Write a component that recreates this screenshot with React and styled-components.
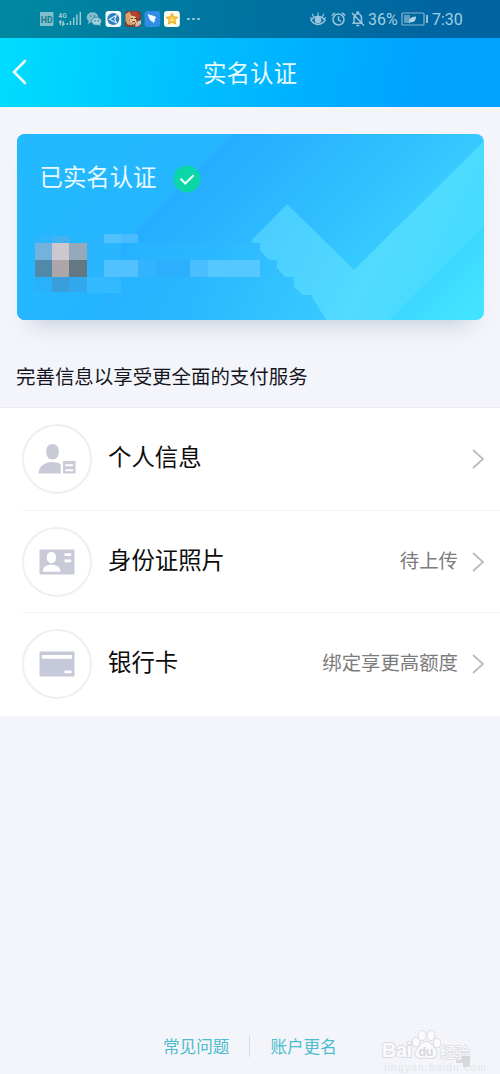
import styled, { createGlobalStyle } from "styled-components";

const GlobalStyle = createGlobalStyle`
  * {
    box-sizing: border-box;
  }
  body {
    margin: 0;
    background: #f4f5fa;
    font-family: Roboto, "Noto Sans CJK SC", sans-serif;
  }
  svg {
    display: block;
    flex-shrink: 0;
  }
`;

const Page = styled.div`
  display: flex;
  flex-direction: column;
  width: 500px;
  height: 1074px;
  overflow: hidden;
  background: #f4f5fa;
`;

const Top = styled.div`
  background: linear-gradient(100deg, #00deff 0%, #00bdff 42%, #00a2ff 85%);
`;

const StatusBar = styled.div`
  display: flex;
  justify-content: space-between;
  align-items: center;
  height: 38px;
  padding: 0 37px 0 39px;
  background: rgba(0, 10, 20, 0.4);
  color: #a3cfe0;
`;

const StatusGroup = styled.div`
  display: flex;
  align-items: center;
  gap: ${(props) => props.$gap}px;
`;

const StatusText = styled.span`
  padding-top: 1px;
  font-size: 16px;
  line-height: 20px;
  width: ${(props) => props.$width}px;
  white-space: nowrap;
`;

const NavBar = styled.header`
  display: grid;
  grid-template-columns: 60px 1fr 60px;
  align-items: center;
  height: 69px;
`;

const BackButton = styled.button`
  padding: 0 0 2px 11px;
  border: 0;
  background: none;
  color: #e9fbff;
`;

const Title = styled.h1`
  margin: 0;
  padding-top: 3px;
  color: #e6faff;
  font-size: 23.5px;
  font-weight: 400;
  line-height: 34px;
  text-align: center;
`;

const Card = styled.section`
  position: relative;
  height: 186px;
  margin: 26.5px 16.5px 0;
  border-radius: 8px;
  box-shadow: 0 17px 22px -14px rgba(120, 140, 170, 0.42);
`;

const CardArt = styled.svg`
  position: absolute;
  top: 0;
  left: 0;
  border-radius: 8px;
`;

const CardHeading = styled.div`
  position: relative;
  display: flex;
  align-items: center;
  gap: 17px;
  padding: 27px 0 0 23px;
`;

const CardTitle = styled.h2`
  margin: 0;
  color: #e9faff;
  font-size: 23.4px;
  font-weight: 400;
  line-height: 34px;
`;

const SectionTitle = styled.h3`
  margin: 43.5px 0 0 16px;
  color: #15151f;
  font-size: 19.45px;
  font-weight: 400;
  line-height: 29px;
`;

const List = styled.div`
  margin-top: 15px;
  background: #fff;
  border-top: 1px solid #ededf1;
`;

const Row = styled.div`
  display: flex;
  align-items: center;
  height: 102.5px;
  padding: 0 15px 0 22px;
`;

const Divider = styled.div`
  height: 1px;
  margin: -1px 0 0 22px;
  background: #f4f4f6;
`;

const RowIcon = styled.div`
  display: flex;
  align-items: center;
  justify-content: center;
  width: 70px;
  height: 70px;
  border: 2px solid #efeff1;
  border-radius: 50%;
`;

const RowLabel = styled.span`
  flex: 1;
  margin: -2px 0 0 16px;
  color: #0c0c0c;
  font-size: 23.4px;
  line-height: 34px;
`;

const RowValue = styled.span`
  margin: 0 13px 0 0;
  color: #7c7c7c;
  font-size: 19.4px;
  line-height: 28px;
`;

const Footer = styled.footer`
  display: flex;
  align-items: center;
  height: 56px;
  margin-top: auto;
  padding-left: 163px;
`;

const FooterLink = styled.a`
  padding-top: 3px;
  color: #4bbdce;
  font-size: 16.6px;
  line-height: 24px;
  white-space: nowrap;
`;

const FooterLine = styled.span`
  width: 1px;
  height: 21px;
  margin: 0 20px;
  background: #d9dce2;
`;

const Watermark = styled.svg`
  margin-left: 43px;
`;

const mosaic = [
  [19, 102, 17, 7, "#2fb5f9"],
  [36, 102, 17, 7, "#43b3ef"],
  [18, 109, 17, 17, "#74b2dc"],
  [35, 109, 17, 17, "#cdc7d0"],
  [52, 109, 18, 17, "#95a9bb"],
  [18, 126, 17, 17, "#5189ab"],
  [35, 126, 17, 17, "#ada5a9"],
  [52, 126, 18, 17, "#647883"],
  [18, 143, 17, 15, "#2bb1f9"],
  [35, 143, 17, 15, "#389fda"],
  [52, 143, 18, 15, "#32a9ec"],
  [70, 102, 17, 7, "#29b5fe"],
  [70, 109, 34, 34, "#29b6ff"],
  [70, 143, 34, 16, "#33b9ff"],
  [87, 100, 17, 9, "#52c2ff"],
  [104, 100, 17, 9, "#49bcff"],
  [87, 126, 34, 17, "#51c2ff"],
  [121, 126, 18, 17, "#33b3fe"],
  [139, 126, 34, 17, "#2cb0fe"],
  [173, 126, 18, 17, "#4abeff"],
  [191, 126, 52, 17, "#57c7ff"],
];

const CardBackground = () => (
  <CardArt width="467" height="186" viewBox="0 0 467 186">
    <defs>
      <linearGradient id="base" gradientUnits="userSpaceOnUse" x1="185" y1="20" x2="400" y2="235">
        <stop offset="0" stopColor="#24abff" />
        <stop offset="0.5" stopColor="#33c2ff" />
        <stop offset="1" stopColor="#42e4ff" />
      </linearGradient>
      <linearGradient id="corner" gradientUnits="userSpaceOnUse" x1="50" y1="0" x2="150" y2="100">
        <stop offset="0" stopColor="#23b9ff" />
        <stop offset="1" stopColor="#25b5ff" />
      </linearGradient>
      <linearGradient id="blocks" gradientUnits="userSpaceOnUse" x1="80" y1="100" x2="300" y2="186">
        <stop offset="0" stopColor="#24b0ff" />
        <stop offset="0.5" stopColor="#2cb8ff" />
        <stop offset="1" stopColor="#38c8ff" />
      </linearGradient>
      <linearGradient id="tick" gradientUnits="userSpaceOnUse" x1="260" y1="80" x2="440" y2="170">
        <stop offset="0" stopColor="#4bceff" />
        <stop offset="0.55" stopColor="#52daff" />
        <stop offset="1" stopColor="#42dcff" />
      </linearGradient>
    </defs>
    <rect width="467" height="186" fill="url(#base)" />
    <path d="M0 0H216L105 111L80 186H0Z" fill="url(#corner)" />
    <path d="M234 107L270 70L337 136L467 7V92L372 186H309Z" fill="url(#tick)" />
    <path
      d="M115 102L121 109H243V126H260V143H277V161H294L309 186H80Z"
      fill="url(#blocks)"
    />
    {mosaic.map(([x, y, width, height, fill]) => (
      <rect key={`${x}-${y}`} x={x} y={y} width={width} height={height} fill={fill} />
    ))}
  </CardArt>
);

const VerifiedBadge = () => (
  <svg width="28" height="34" viewBox="0 -4 28 34" fill="none">
    <circle cx="14" cy="14" r="13.5" fill="#0bd6a8" />
    <path d="M7.5 13.8L12.3 18.500L20.700 10.3" stroke="#e9fff9" strokeWidth="2.200" />
  </svg>
);

const SignalIcons = () => (
  <svg width="156" height="20" viewBox="39 9 156 20" fill="none">
    <rect x="40" y="12" width="13.5" height="14" rx="1" fill="#83bfca" />
    <text x="40.8" y="22.5" fontSize="9.500" fontWeight="700" fill="#137b91" textLength="12" lengthAdjust="spacingAndGlyphs">HD</text>
    <text x="58.3" y="17.8" fontSize="8" fontWeight="700" fill="#9ccad5" textLength="8.500" lengthAdjust="spacingAndGlyphs">4G</text>
    <path
      d="M60.5 25v-4l-1.5 1.5M63 21v4l1.5-1.5M67.3 23v2M70.5 21v4M73.7 17.5v7.5M76.9 14.5V25M80.3 12V25"
      stroke="#9ccad5"
      strokeWidth="1.5"
    />
    <ellipse cx="92.5" cy="17.3" rx="5.8" ry="5" fill="#86bdcc" />
    <path d="M89 20l-1 4 4-2" fill="#86bdcc" />
    <ellipse cx="96.5" cy="21.3" rx="5" ry="4" fill="#a4cfda" stroke="#137b91" strokeWidth="0.7" />
    <path d="M98 24.5l2.5 1.5-.5-3" fill="#a4cfda" />
    <g fill="#137b91">
      <circle cx="90.7" cy="16" r=".8" />
      <circle cx="94.5" cy="16" r=".8" />
      <circle cx="95" cy="20.7" r=".7" />
      <circle cx="98.3" cy="20.7" r=".7" />
    </g>
    <rect x="105.5" y="11" width="15.7" height="16" rx="3" fill="#f1f9fc" />
    <circle cx="113.3" cy="19" r="6" fill="#2b7fc3" />
    <path d="M109.3 19.3l7-3.8-1.5 3.8 1.5 3.6z" fill="#2b7fc3" stroke="#dff2fb" strokeWidth="1.1" />
    <rect x="125" y="11" width="16" height="16" rx="3" fill="#803c34" />
    <path d="M125.5 14l4-2.5 2 4-2 5 3 5-5-1-2-4z" fill="#d9a36d" />
    <path d="M131 12l5-.5 4 4-2 3.5-3-3-3 1z" fill="#b6432e" />
    <path d="M130.5 15.5l5 1 1 5-3 3.5-3.5-3z" fill="#efc99c" />
    <path d="M131 18.5h2M134.5 18.5h2M132 22l3-.5" stroke="#693023" />
    <path d="M136 22l5-2v4l-3 2.5h-3z" fill="#dbb9a8" />
    <rect x="144.5" y="11" width="15.7" height="16" rx="3" fill="#2f8de4" />
    <path d="M147.8 13.8c2.5 1.3 5.700 2 7.900 3l.3 1.2-1.7 1.8 1.2.2-2.500 3.600-.3-2-1.600-.3c-1.400-1.500-2.600-3.500-3.300-7.500z" fill="#f0faff" />
    <rect x="164" y="11" width="15.8" height="16" rx="3" fill="#fffdf0" />
    <path
      d="M172 13.2l1.8 3.5 4 .6-2.900 2.800.7 4-3.600-1.900-3.600 1.900.7-4-2.900-2.800 4-.6z"
      fill="#f6c844"
      stroke="#eaaf24"
      strokeWidth="1"
      strokeLinejoin="round"
    />
    <path d="M170 19.6q2 1.600 4 0" stroke="#fff4c6" strokeWidth="1" />
  </svg>
);

const MoreDot = styled.i`
  width: 2.5px;
  height: 2.5px;
  margin-left: ${(props) => (props.$first ? -8 : 2.5)}px;
  border-radius: 50%;
  background: #9ecae0;
`;

const SystemIcons = () => (
  <svg width="56" height="18" viewBox="309 10 56 18" fill="none" stroke="#9bc5dc" strokeWidth="1.5">
    <path d="M311 20.200C314.500 15.300 321.500 15.300 325 20.200C321.500 25.800 314.500 25.800 311 20.200Z" />
    <circle cx="318" cy="20" r="2.600" fill="#9bc5dc" />
    <path d="M318 16v-3.500M314 17l-2-3.200M322 17l2-3.200M311.700 18.800l-1.400-1.400M324.300 18.800l1.400-1.400" strokeWidth="1.200" />
    <circle cx="338.500" cy="19.500" r="5.500" />
    <path d="M338.500 16.200v3.700l2.400 1.800M331.800 15.500l3-2.800M345.200 15.500l-3-2.800" />
    <path d="M354 22.800V18c0-2 1.300-3.600 3-4.100v-1.700h1.500v1.700c1.800.5 3 2.200 3 4.100v4.800M352.300 23.300h10.500M356.300 25.500h3M352 13l12 12.500" />
  </svg>
);

const BatteryIcon = () => (
  <svg width="28" height="14" viewBox="401 12 28 14" fill="none">
    <rect x="402" y="13" width="22" height="12" rx="1" stroke="#85b8d3" strokeWidth="1.200" />
    <path d="M404 15h6v8h-6z" fill="#5f9fc3" />
    <path d="M409 22.500c-.2-3.800 2-5.600 7-5.900-.1 4.200-1.800 6.300-5.600 5.300l-1.400 1.600z" fill="#b1d4e5" />
    <path d="M427 15v8" stroke="#a5cade" strokeWidth="1.800" />
  </svg>
);

const PersonIcon = () => (
  <svg width="38" height="32" viewBox="0 0 38 32" fill="#c9cad8">
    <path d="M14.500 1c4 0 6.300 2.700 6.300 7.500s-2.300 8-6.300 8-6.300-3.200-6.300-8S10.500 1 14.500 1Z" />
    <path d="M.5 30.500C.5 23 7 19 14 19c3.500 0 6.500.7 8.700 2.200v9.300Z" />
    <path fillRule="evenodd" d="M25 18h12.500v12.500H25Zm2.200 3.200v2H35v-2Zm0 5v2H35v-2Z" />
  </svg>
);

const IdCardIcon = () => (
  <svg width="36" height="26" viewBox="0 0 36 26">
    <rect x=".5" y=".5" width="35" height="25" rx="1" fill="#c9cad8" />
    <g fill="#fff">
      <ellipse cx="12.400" cy="8.500" rx="4.700" ry="5.700" />
      <path d="M3.500 22.800c0-4.500 4-7 9-7s9 2.500 9 7Z" />
      <path d="M25.500 4.300h6.700v2.800h-6.700zM25.500 10.500h6.700v2.800h-6.700z" />
    </g>
  </svg>
);

const BankCardIcon = () => (
  <svg width="36" height="26" viewBox="0 0 36 26">
    <rect x=".5" y=".5" width="35" height="25" rx="1" fill="#c6c9da" />
    <path d="M3 4h30v3.700H3zM25.500 19.500h7v2.700h-7z" fill="#fff" />
  </svg>
);

const Arrow = () => (
  <svg width="14" height="20" viewBox="0 0 14 20" fill="none">
    <path d="M2 1L12 10L2 19" stroke="#bbbbbd" strokeWidth="1.800" />
  </svg>
);

const BaiduMark = () => (
  <Watermark width="118" height="56" viewBox="0 0 118 56" fontFamily="Liberation Sans, Noto Sans CJK SC, sans-serif">
    <text x="4" y="53" fontSize="10.500" fill="#e3e5ea" textLength="102">jingyan.baidu.com</text>
    <g fill="#fbfbfd" stroke="#dbdce1" strokeWidth="2" strokeLinejoin="round" paintOrder="stroke">
      <text x="2" y="39" fontSize="20" fontWeight="700" textLength="30">Bai</text>
      <path d="M46 24c5 0 6 4 9 7 3 4 1 9-4 9-3 0-7-1-10 0-5 0-7-4-4-8 3-3 4-8 9-8Z" />
      <ellipse cx="36" cy="24" rx="3.200" ry="4.300" />
      <ellipse cx="42" cy="17.500" rx="3.500" ry="4.500" />
      <ellipse cx="51" cy="17.500" rx="3.500" ry="4.500" />
      <ellipse cx="57" cy="25" rx="3.200" ry="4.300" />
      <text x="60" y="40" fontSize="15" strokeWidth="1.500" textLength="30">经验</text>
    </g>
    <text x="38.500" y="38" fontSize="12.500" fontWeight="700" fill="#d5d7dd" textLength="15">du</text>
    <path d="M76 42h6v-4h8v11h-7v-4h-7z" fill="#d1d2d6" opacity=".8" />
  </Watermark>
);

const rows = [
  { label: "个人信息", Icon: PersonIcon },
  { label: "身份证照片", Icon: IdCardIcon, value: "待上传" },
  { label: "银行卡", Icon: BankCardIcon, value: "绑定享更高额度" },
];

const App = () => {
  return (
    <Page>
      <GlobalStyle />
      <Top>
        <StatusBar>
          <StatusGroup $gap={0}>
            <SignalIcons />
            <MoreDot $first />
            <MoreDot />
            <MoreDot />
          </StatusGroup>
          <StatusGroup $gap={3}>
            <SystemIcons />
            <StatusText $width={30}>36%</StatusText>
            <BatteryIcon />
            <StatusText $width={31}>7:30</StatusText>
          </StatusGroup>
        </StatusBar>
        <NavBar>
          <BackButton>
            <svg width="18" height="26" viewBox="0 0 18 26" fill="none">
              <path d="M14 2L3 13L14 24" stroke="currentColor" strokeWidth="2.600" strokeLinecap="round" />
            </svg>
          </BackButton>
          <Title>实名认证</Title>
        </NavBar>
      </Top>
      <Card>
        <CardBackground />
        <CardHeading>
          <CardTitle>已实名认证</CardTitle>
          <VerifiedBadge />
        </CardHeading>
      </Card>
      <SectionTitle>完善信息以享受更全面的支付服务</SectionTitle>
      <List>
        {rows.map(({ label, Icon, value }, index) => (
          <div key={label}>
            {index > 0 && <Divider />}
            <Row>
              <RowIcon>
                <Icon />
              </RowIcon>
              <RowLabel>{label}</RowLabel>
              {value && <RowValue>{value}</RowValue>}
              <Arrow />
            </Row>
          </div>
        ))}
      </List>
      <Footer>
        <FooterLink>常见问题</FooterLink>
        <FooterLine />
        <FooterLink>账户更名</FooterLink>
        <BaiduMark />
      </Footer>
    </Page>
  );
};

export default App;
